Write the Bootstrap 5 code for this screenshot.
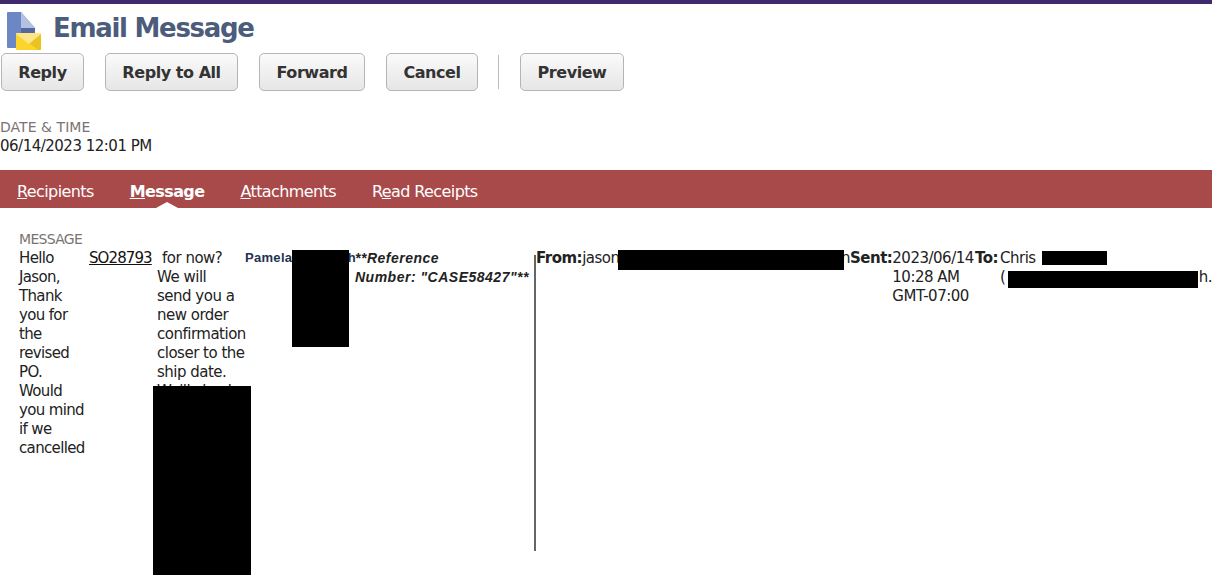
<!DOCTYPE html>
<html lang="en"><head><meta charset="utf-8"><title>Email Message</title>
<link href="https://cdn.jsdelivr.net/npm/bootstrap@5.3.0/dist/css/bootstrap.min.css" rel="stylesheet">
<style>
html,body{height:575px;overflow:hidden}
body{font-family:"DejaVu Sans","Noto Sans",sans-serif;font-size:15px;letter-spacing:-.5px;line-height:19px;color:#222;background:#fff}
.top-rule{height:4px;background:#3f2a6d}
.page-head{height:47px;padding-left:6px;gap:11px}
.page-head svg{align-self:flex-start;margin-top:7px}
.page-title{font-size:26px;letter-spacing:-1.3px;line-height:49px;font-weight:700;color:#4c5c7c;margin:0}
.act-row{padding-left:1px;gap:21px;height:38px;margin-top:2px}
.act-btn{height:38px;padding:1px 0 0;font-size:16px;letter-spacing:-.45px;font-weight:700;color:#333;border:1px solid #b5b5b5;border-radius:5px;background:linear-gradient(#fafafa,#e6e6e6)}
.act-sep{width:1px;height:34px;background:#bbb;margin-left:-1px}
.w-reply{width:83px}.w-all{width:133px}.w-fwd{width:106px}.w-cancel{width:92px}.w-prev{width:104px}
.dt-block{margin-top:27px;height:52px}
.fld-label{color:#7a7372;font-size:14px;letter-spacing:.05px;line-height:19px}
.msg-label{letter-spacing:-.7px}
.tab-bar{height:38px;background:#a84a4a;padding-left:17px;gap:36px;align-items:flex-start}
.tab-link{color:#fff;text-decoration:none;font-size:16px;letter-spacing:-.6px;position:relative;height:38px;line-height:44px}
.tab-link.on{font-weight:700;letter-spacing:-.6px}
.tab-link.on::after{content:"";position:absolute;left:50%;bottom:0;margin-left:-11px;border:solid transparent;border-width:0 11px 6px;border-bottom-color:#fff}
.msg-area{position:relative;padding:22px 0 0 19px;height:367px}
.msg-cols{align-items:flex-start}
.c1{width:70px;letter-spacing:-.65px}.c2{width:68px;letter-spacing:-.9px}.c3{width:88px}
.c4{width:111px;margin-top:-1px;font:700 13px/19px "Liberation Sans",Arial,sans-serif;letter-spacing:.3px;color:#1f3350}
.c5{width:178px;font:italic 700 14px/19px "Liberation Sans",Arial,sans-serif;letter-spacing:.5px;margin-left:-1px}
.msg-rule{width:2px;height:296px;background:#666;margin:6px 0 0 1px}
.c6{width:314px}
.c7{width:125px}.c8{flex:1}
.to-value{margin-left:2px}
.so-link{color:#111;text-decoration:underline}
.lead-in{padding-left:5px}
.redact{position:absolute;background:#000}
.r1{left:153px;top:178px;width:98px;height:189px}
.r2{left:292px;top:42px;width:57px;height:97px}
.r3{left:618px;top:42px;width:226px;height:20px}
.r4{left:1042px;top:43px;width:65px;height:14px}
.r5{left:1008px;top:63px;width:190px;height:17px}
</style></head>
<body>
<div class="top-rule"></div>
<div class="page-head d-flex">
<svg width="36" height="40" viewBox="0 0 36 40" aria-hidden="true"><path d="M1 2a1 1 0 0 1 1-1h13l14 16v20H2a1 1 0 0 1-1-1z" fill="#6c88c4"/><path d="M15 1l14 16H15z" fill="#b4c2e2"/><path d="M15 17h14v8H15z" fill="#55699c"/><path d="M11 22h23a1 1 0 0 1 1 1v15a1 1 0 0 1-1 1H11a1 1 0 0 1-1-1V23a1 1 0 0 1 1-1z" fill="#fbd52e"/><path d="M35 23v15a1 1 0 0 1-1 1h-2L22 31z" fill="#e9c31f"/><path d="M10 23a1 1 0 0 1 1-1h23a1 1 0 0 1 1 1L23 33z" fill="#fde588"/></svg>
<h1 class="page-title">Email Message</h1>
</div>
<div class="act-row d-flex align-items-center">
<button class="btn act-btn w-reply">Reply</button>
<button class="btn act-btn w-all">Reply to All</button>
<button class="btn act-btn w-fwd">Forward</button>
<button class="btn act-btn w-cancel">Cancel</button>
<span class="act-sep"></span>
<button class="btn act-btn w-prev">Preview</button>
</div>
<div class="dt-block">
<div class="fld-label">DATE &amp; TIME</div>
<div>06/14/2023 12:01 PM</div>
</div>
<nav class="tab-bar d-flex">
<a class="tab-link" href="#"><u>R</u>ecipients</a>
<a class="tab-link on" href="#"><u>M</u>essage</a>
<a class="tab-link" href="#"><u>A</u>ttachments</a>
<a class="tab-link" href="#">R<u>e</u>ad Receipts</a>
</nav>
<div class="msg-area">
<div class="fld-label msg-label">MESSAGE</div>
<div class="msg-cols d-flex">
<div class="c1">Hello Jason, Thank you for the revised PO. Would you mind if we cancelled</div>
<div class="c2"><a class="so-link" href="#">SO28793</a></div>
<div class="c3"><div class="lead-in">for now?</div>We will<br>send you a new order confirmation closer to the ship date. We'll check</div>
<div class="c4 d-flex justify-content-between"><span>Pamela</span><span>h</span></div>
<div class="c5">**Reference<br>Number: "CASE58427"**</div>
<div class="msg-rule"></div>
<div class="c6 d-flex justify-content-between"><span><b>From:</b>jason</span><span>n</span></div>
<div class="c7 d-flex"><b>Sent:</b><span>2023/06/14 10:28 AM GMT-07:00</span></div>
<div class="c8 d-flex"><b>To:</b><div class="flex-grow-1 to-value"><div>Chris</div><div class="d-flex justify-content-between"><span>(</span><span>h.</span></div></div></div>
</div>
<div class="redact r1"></div><div class="redact r2"></div><div class="redact r3"></div><div class="redact r4"></div><div class="redact r5"></div>
</div>
<script src="https://cdn.jsdelivr.net/npm/bootstrap@5.3.0/dist/js/bootstrap.bundle.min.js"></script>
</body></html>
